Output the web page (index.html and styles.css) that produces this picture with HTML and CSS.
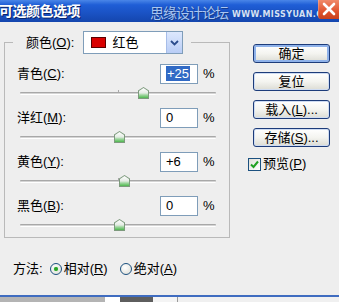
FILE: index.html
```html
<!DOCTYPE html>
<html lang="zh-CN">
<head>
  <meta charset="UTF-8">
  <title>可选颜色选项</title>
  <link rel="stylesheet" href="styles.css">
</head>
<body>

  <div class="titlebar">
    <span class="title">可选颜色选项</span>
    <span class="mark">
      <span class="mark-cn">思缘设计论坛</span>
      <span class="mark-en">WWW.MISSYUAN.COM</span>
    </span>
    <span class="close">
      <svg width="20" height="19" viewBox="0 0 20 19">
        <path d="M5 4 L15 14 M15 4 L5 14" stroke="#fff" stroke-width="2.6" stroke-linecap="round"/>
      </svg>
    </span>
  </div>

  <div class="dialog">
    <div class="main">
      <fieldset class="group">
        <legend class="legend">
          <span class="legend-label">颜色(<u>O</u>):</span>
          <span class="select">
            <span class="swatch"></span>
            <span class="select-text">红色</span>
            <span class="select-arrow">
              <svg width="9" height="6" viewBox="0 0 9 6"><path d="M1 1 L4.5 4.5 L8 1" fill="none" stroke="#2b4c8c" stroke-width="1.8"/></svg>
            </span>
          </span>
        </legend>

        <div class="row">
          <div class="line">
            <span class="label">青色(<u>C</u>):</span>
            <span class="field"><span class="sel">+25</span></span>
            <span class="pct">%</span>
          </div>
          <div class="track"><span class="tick"></span><span class="thumb" style="left: 123px"></span></div>
        </div>

        <div class="row">
          <div class="line">
            <span class="label">洋红(<u>M</u>):</span>
            <span class="field">0</span>
            <span class="pct">%</span>
          </div>
          <div class="track"><span class="tick"></span><span class="thumb" style="left: 99px"></span></div>
        </div>

        <div class="row">
          <div class="line">
            <span class="label">黄色(<u>Y</u>):</span>
            <span class="field">+6</span>
            <span class="pct">%</span>
          </div>
          <div class="track"><span class="tick"></span><span class="thumb" style="left: 104px"></span></div>
        </div>

        <div class="row">
          <div class="line">
            <span class="label">黑色(<u>B</u>):</span>
            <span class="field">0</span>
            <span class="pct">%</span>
          </div>
          <div class="track"><span class="tick"></span><span class="thumb" style="left: 99px"></span></div>
        </div>
      </fieldset>

      <div class="method">
        <span class="method-label">方法:</span>
        <span class="radio checked"></span>
        <span class="radio-text">相对(<u>R</u>)</span>
        <span class="radio"></span>
        <span class="radio-text">绝对(<u>A</u>)</span>
      </div>
    </div>

    <div class="side">
      <div class="btn default">确定</div>
      <div class="btn">复位</div>
      <div class="btn btn-load">载入(<u>L</u>)...</div>
      <div class="btn">存储(<u>S</u>)...</div>
      <div class="check">
        <span class="box">
          <svg width="11" height="11" viewBox="0 0 11 11"><path d="M2 5.5 L4.5 8 L9 2.5" fill="none" stroke="#21a121" stroke-width="2"/></svg>
        </span>
        <span>预览(<u>P</u>)</span>
      </div>
    </div>
  </div>

  <div class="taskbar">
    <span class="seg seg-grey"></span>
    <span class="seg seg-white"></span>
    <span class="seg seg-dark"></span>
    <span class="seg seg-light"></span>
    <span class="seg seg-rest"></span>
  </div>

</body>
</html>
```

FILE: styles.css
```css
body {
  margin: 0;
  width: 339px;
  height: 302px;
  overflow: hidden;
  font-family: "Liberation Sans", "Noto Sans CJK SC", sans-serif;
  font-size: 13px;
  color: #000;
  background-color: #eeeeee;
}

u {
  text-decoration: underline;
  text-underline-offset: 1px;
}

/* title bar */

.titlebar {
  height: 22px;
  display: flex;
  align-items: flex-start;
  background: linear-gradient(#4a86e8 0, #1f5ed6 22%, #1a52c4 60%, #1446ae 100%);
  overflow: hidden;
}

.title {
  margin-left: -1px;
  margin-top: 2px;
  font-size: 14px;
  font-weight: bold;
  line-height: 18px;
  color: #fff;
  letter-spacing: -0.5px;
  text-shadow: 1px 1px 0 #0a246a;
}

.mark {
  margin-left: auto;
  margin-top: 6px;
  display: flex;
  align-items: flex-end;
  gap: 4px;
}

.mark-cn {
  font-size: 14px;
  line-height: 15px;
  letter-spacing: -1px;
  color: #a9c6f2;
  text-shadow: 0 0 1px #163e90, 1px 1px 0 #163e90;
}

.mark-en {
  font-family: "DejaVu Sans", sans-serif;
  font-size: 8px;
  font-weight: bold;
  line-height: 12px;
  color: #d4e2f8;
  letter-spacing: 0.4px;
  text-shadow: 0 0 1px #163e90;
}

.close {
  width: 20px;
  height: 19px;
  margin-left: -20px;
  flex: none;
  border-radius: 0 0 0 3px;
  background: linear-gradient(#f08a6a, #e0532e 60%, #c8401c);
  border-left: 1px solid #fff3;
}

.close svg {
  display: block;
}

/* dialog body */

.dialog {
  height: 273px;
  display: flex;
}

.main {
  width: 226px;
  margin-left: 4px;
}

.group {
  margin: 9px 0 0;
  padding: 0 12px;
  border: 1px solid #b9b9b9;
  box-sizing: border-box;
  width: 226px;
}

.legend {
  display: flex;
  align-items: center;
  margin-left: -4px;
  padding: 0 8px 0 13px;
  height: 23px;
}

.legend-label {
  margin-right: 9px;
  line-height: 16px;
}

.select {
  width: 100px;
  height: 23px;
  box-sizing: border-box;
  display: flex;
  align-items: center;
  border: 1px solid #7f9db9;
  background-color: #fff;
}

.swatch {
  width: 13px;
  height: 9px;
  margin-left: 7px;
  background-color: #d90000;
  border: 1px solid #5a0000;
}

.select-text {
  margin-left: 6px;
  flex: 1;
  line-height: 16px;
}

.select-arrow {
  width: 15px;
  height: 21px;
  display: flex;
  align-items: center;
  justify-content: center;
  background: linear-gradient(#dde8fd, #b9cdf6);
  border-left: 1px solid #a7bde8;
}

.row {
  height: 44px;
}

.row:first-of-type {
  margin-top: 10px;
}

.row:last-child {
  height: 41px;
}

.line {
  height: 20px;
  display: flex;
  align-items: center;
}

.label {
  flex: 1;
  line-height: 16px;
}

.field {
  width: 38px;
  height: 20px;
  box-sizing: border-box;
  padding-left: 5px;
  border: 1px solid #7f9db9;
  background-color: #fff;
  line-height: 18px;
}

.sel {
  display: inline-block;
  padding: 0 1px;
  line-height: 15px;
  background-color: #316ac5;
  color: #fff;
}

.pct {
  width: 14px;
  margin-left: 5px;
  line-height: 16px;
}

.track {
  position: relative;
  margin: 8px 1px 0 3px;
  height: 1px;
  border-top: 1px solid #a8a8a8;
  border-bottom: 1px solid #ffffff;
  background-color: #d4d4d4;
  border-radius: 1px;
}

.tick {
  position: absolute;
  left: 98px;
  top: -3px;
  width: 1px;
  height: 3px;
  background-color: #a8a8a8;
}

.thumb {
  position: absolute;
  top: -6px;
  width: 11px;
  height: 12px;
  margin-left: -5px;
  clip-path: polygon(50% 0, 100% 30%, 100% 100%, 0 100%, 0 30%);
  background: linear-gradient(#7d9a7d, #7d9a7d);
}

.thumb::after {
  content: "";
  position: absolute;
  inset: 1px;
  clip-path: polygon(50% 0, 100% 30%, 100% 100%, 0 100%, 0 30%);
  background: linear-gradient(#ffffff 0, #e4ece4 50%, #9ed69e 70%, #4fb84f 100%);
}

.method {
  height: 20px;
  margin-top: 21px;
  padding-left: 9px;
  display: flex;
  align-items: center;
  line-height: 16px;
}

.method-label {
  margin-right: 7px;
}

.radio {
  width: 12px;
  height: 12px;
  box-sizing: border-box;
  border: 1px solid #1c5180;
  border-radius: 50%;
  background: radial-gradient(circle at 40% 35%, #ffffff, #dcdcd4);
  margin-right: 2px;
  display: flex;
  align-items: center;
  justify-content: center;
}

.radio.checked::after {
  content: "";
  width: 4px;
  height: 4px;
  border-radius: 50%;
  background-color: #29a329;
  box-shadow: 0 0 1px #5fd05f;
}

.radio-text {
  margin-right: 12px;
}

/* right column */

.side {
  margin-left: 23px;
  padding-top: 22px;
  width: 77px;
}

.btn {
  height: 19px;
  box-sizing: border-box;
  border: 1px solid #1d3c7a;
  border-radius: 3px;
  background: linear-gradient(#ffffff 0, #f4f4f0 50%, #dcdcd4 100%);
  box-shadow: inset 0 0 0 1px #cfdcf2;
  text-align: center;
  line-height: 17px;
  margin-bottom: 9px;
}

.btn.default {
  box-shadow: inset 0 0 0 2px #8fb2ea;
}

.btn-load {
  margin-top: 7px;
}

.check {
  margin-top: 5px;
  margin-left: -5px;
  display: flex;
  align-items: center;
  line-height: 16px;
}

.box {
  width: 13px;
  height: 13px;
  box-sizing: border-box;
  border: 1px solid #1c5180;
  background: linear-gradient(135deg, #e0e0d8, #ffffff);
  margin-right: 2px;
  display: flex;
  align-items: center;
  justify-content: center;
}

.box svg {
  display: block;
}

/* bottom strip */

.taskbar {
  height: 7px;
  border-top: 2px solid #3f6cc0;
  box-sizing: border-box;
  display: flex;
}

.seg {
  height: 5px;
}

.seg-grey {
  width: 105px;
  background-color: #b4b4b4;
}

.seg-white {
  width: 15px;
  background-color: #ffffff;
}

.seg-dark {
  width: 33px;
  background-color: #5e5e5e;
}

.seg-light {
  width: 24px;
  background-color: #f4f4f4;
  border-right: 1px solid #9a9a9a;
}

.seg-rest {
  flex: 1;
  background-color: #f0f0f0;
}
```
